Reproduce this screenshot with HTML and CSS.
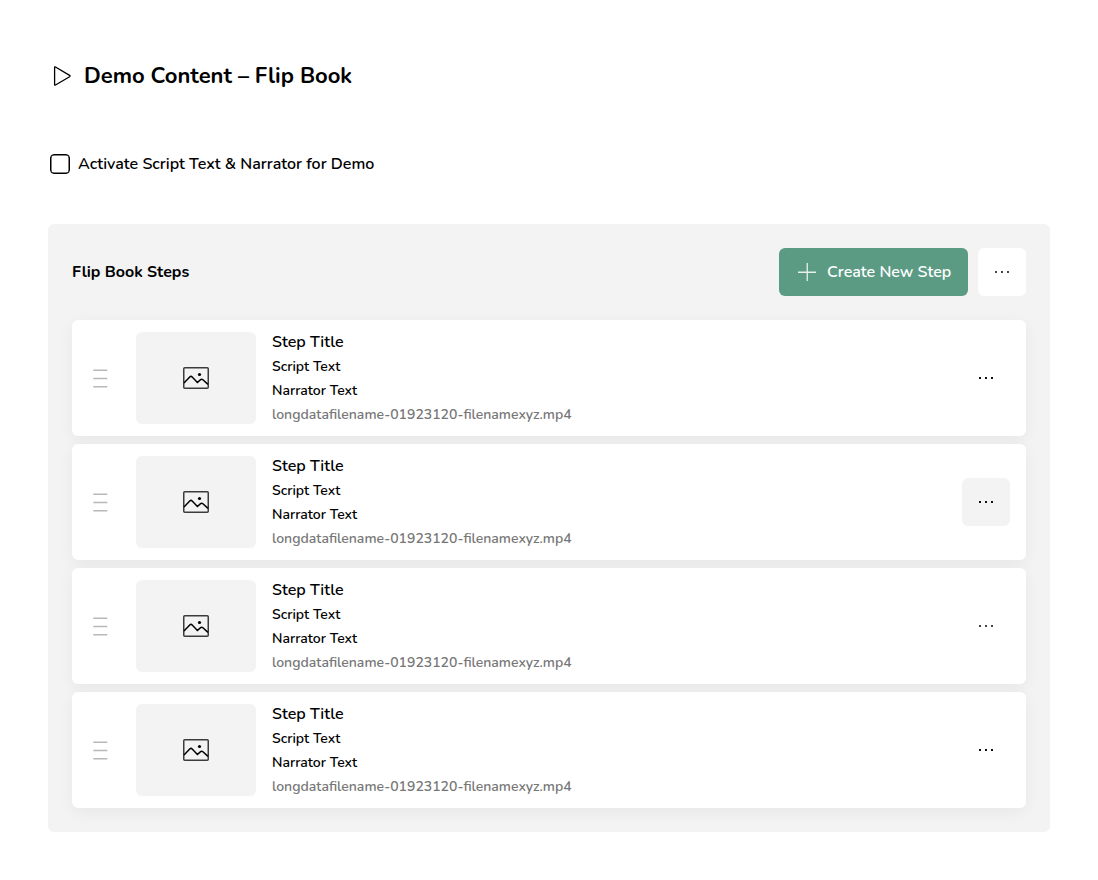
FILE: index.html
```html
<!DOCTYPE html>
<html lang="en">
<head>
<meta charset="utf-8">
<title>Demo Content – Flip Book</title>
<link rel="stylesheet" href="styles.css">
</head>
<body>
<svg class="sprite" aria-hidden="true">
  <symbol id="dots" viewBox="0 0 16 4"><path d="M1 1h2v2H1zM7 1h2v2H7zM13 1h2v2h-2z" fill="currentColor"/></symbol>
  <symbol id="image" viewBox="0 0 26 22"><rect x=".75" y=".75" width="24.5" height="20.5" rx="1" fill="none" stroke="#3c3c3c" stroke-width="1.5"/><path d="M1 16l5.7-6q1.3-1.2 2.5 0l5.2 5.5 3.2-2.8q1.2-.9 2.3.1l5.1 4.6" fill="none" stroke="#000" stroke-width="1.5"/><circle cx="16.5" cy="7.5" r="1.6"/></symbol>
  <symbol id="handle" viewBox="0 0 16 20"><path d="M1.3 2.25h14M1.3 10.5h14M1.3 18.75h14" stroke="#b8b8b8" stroke-width="1.3" fill="none"/></symbol>
</svg>
<main class="page">
  <header class="heading">
    <svg class="play" viewBox="0 0 24 24"><path d="M6.6 3.5v17q0 1 .9.5l14.1-8.3q.9-.7 0-1.3L7.5 3q-.9-.5-.9.5z" fill="none" stroke="#000" stroke-width="1.3" stroke-linejoin="round"/></svg>
    <h1 class="title">Demo Content – Flip Book</h1>
  </header>
  <label class="option"><input class="check" type="checkbox"><span class="option-text">Activate Script Text &amp; Narrator for Demo</span></label>
  <section class="panel">
    <div class="toolbar">
      <h2 class="subtitle">Flip Book Steps</h2>
      <button class="create"><svg class="plus" viewBox="0 0 20 20"><path d="M1 10.25h18M10.25 1v18" stroke="#fff" stroke-width="1.3" stroke-opacity=".85"/></svg><span>Create New Step</span></button>
      <button class="more more-light"><svg class="dots"><use href="#dots"/></svg></button>
    </div>
    <div class="steps">
      <article class="step">
        <svg class="handle"><use href="#handle"/></svg>
        <div class="thumb"><svg class="image"><use href="#image"/></svg></div>
        <div class="info"><h3 class="name">Step Title</h3><p class="script">Script Text</p><p class="narrator">Narrator Text</p><p class="file">longdatafilename-01923120-filenamexyz.mp4</p></div>
        <button class="more"><svg class="dots"><use href="#dots"/></svg></button>
      </article>
      <article class="step">
        <svg class="handle"><use href="#handle"/></svg>
        <div class="thumb"><svg class="image"><use href="#image"/></svg></div>
        <div class="info"><h3 class="name">Step Title</h3><p class="script">Script Text</p><p class="narrator">Narrator Text</p><p class="file">longdatafilename-01923120-filenamexyz.mp4</p></div>
        <button class="more more-active"><svg class="dots"><use href="#dots"/></svg></button>
      </article>
      <article class="step">
        <svg class="handle"><use href="#handle"/></svg>
        <div class="thumb"><svg class="image"><use href="#image"/></svg></div>
        <div class="info"><h3 class="name">Step Title</h3><p class="script">Script Text</p><p class="narrator">Narrator Text</p><p class="file">longdatafilename-01923120-filenamexyz.mp4</p></div>
        <button class="more more-soft"><svg class="dots"><use href="#dots"/></svg></button>
      </article>
      <article class="step">
        <svg class="handle"><use href="#handle"/></svg>
        <div class="thumb"><svg class="image"><use href="#image"/></svg></div>
        <div class="info"><h3 class="name">Step Title</h3><p class="script">Script Text</p><p class="narrator">Narrator Text</p><p class="file">longdatafilename-01923120-filenamexyz.mp4</p></div>
        <button class="more"><svg class="dots"><use href="#dots"/></svg></button>
      </article>
    </div>
  </section>
</main>
</body>
</html>
```
FILE: styles.css
```css
* { box-sizing: border-box; }
body, h1, h2, h3, p { margin: 0; }
body { background: #fff; color: #000; font-family: Nunito, Lato, "Open Sans", sans-serif; font-weight: 600; -webkit-font-smoothing: antialiased; }
button { border: 0; padding: 0; font: inherit; }
svg { display: block; flex: none; }
.sprite { display: none; }
.page { padding: 60px 48px 48px; }
.heading { display: flex; align-items: center; gap: 12px; height: 32px; }
.play { width: 24px; height: 24px; }
.title { font-size: 22px; line-height: 32px; font-weight: 700; white-space: nowrap; }
.option { display: flex; align-items: center; gap: 8px; height: 24px; margin-top: 60px; padding-left: 2px; }
.check { appearance: none; width: 20px; height: 20px; margin: 0; border: 1.5px solid #000; border-radius: 4px; background: #fff; box-shadow: inset 0 0 0 .5px #000; }
.option-text { font-size: 16px; line-height: 24px; }
.panel { margin-top: 48px; padding: 24px; border-radius: 6px; background: #f3f3f3; }
.toolbar { display: flex; align-items: center; gap: 10px; height: 48px; }
.subtitle { flex: 1; font-size: 16px; line-height: 24px; font-weight: 700; }
.create { display: flex; align-items: center; width: 189px; height: 48px; padding-left: 18px; gap: 10px; border-radius: 6px; background: #5b9b84; color: #fff; font-size: 16px; white-space: nowrap; }
.plus { width: 20px; height: 20px; }
.more { display: flex; align-items: center; justify-content: center; width: 48px; height: 48px; border-radius: 6px; background: transparent; color: #111; }
.more-light { background: #fff; color: #444; }
.more-active { background: #f3f3f3; }
.more-soft { color: #444; }
.dots { width: 16px; height: 4px; }
.steps { display: flex; flex-direction: column; gap: 8px; margin-top: 24px; }
.step { display: flex; align-items: center; height: 116px; padding: 12px 16px 12px 20px; border-radius: 6px; background: #fff; box-shadow: 0 4px 16px rgba(0, 0, 0, .05); }
.handle { width: 16px; height: 20px; }
.thumb { display: flex; align-items: center; justify-content: center; width: 120px; height: 92px; margin: 0 16px 0 28px; border-radius: 6px; background: #f3f3f3; }
.image { width: 26px; height: 22px; }
.info { flex: 1; height: 96px; white-space: nowrap; }
.name { font-size: 16px; line-height: 24px; font-weight: 600; margin-bottom: 1px; }
.script, .narrator, .file { font-size: 14px; line-height: 24px; }
.file { color: #777; }
```
